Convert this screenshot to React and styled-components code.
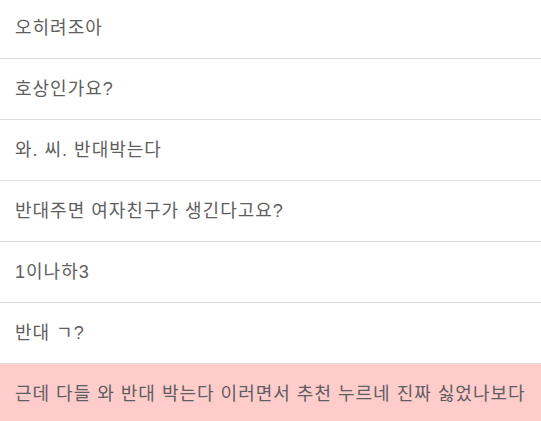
import React from 'react'
import styled, { createGlobalStyle } from 'styled-components'

const GlobalStyle = createGlobalStyle`
  html, body {
    margin: 0;
    padding: 0;
    background: #fff;
  }
  body {
    font-family: "Liberation Sans", Arial, "Noto Sans CJK KR", sans-serif;
    overflow: hidden;
  }
`

const CommentList = styled.ul`
  list-style: none;
  margin: -2px 0 0 0;
  padding: 0;
`

const CommentRow = styled.li`
  padding: 19px 15px 19px;
  height: 22px;
  font-size: 18px;
  line-height: 22px;
  letter-spacing: 1px;
  color: #5e5e5e;
  border-bottom: 1px solid #ddd;
  background: ${(p) => (p.$highlight ? '#ffcccc' : '#fff')};
  white-space: nowrap;
`

const comments = [
  '오히려조아',
  '호상인가요?',
  '와. 씨. 반대박는다',
  '반대주면 여자친구가 생긴다고요?',
  '1이나하3',
  '반대 ㄱ?',
  '근데 다들 와 반대 박는다 이러면서 추천 누르네 진짜 싫었나보다',
]

const App = () => {
  return (
    <>
      <GlobalStyle />
      <CommentList>
        {comments.map((text, i) => (
          <CommentRow key={i} $highlight={i === comments.length - 1}>
            {text}
          </CommentRow>
        ))}
      </CommentList>
    </>
  )
}

export default App
